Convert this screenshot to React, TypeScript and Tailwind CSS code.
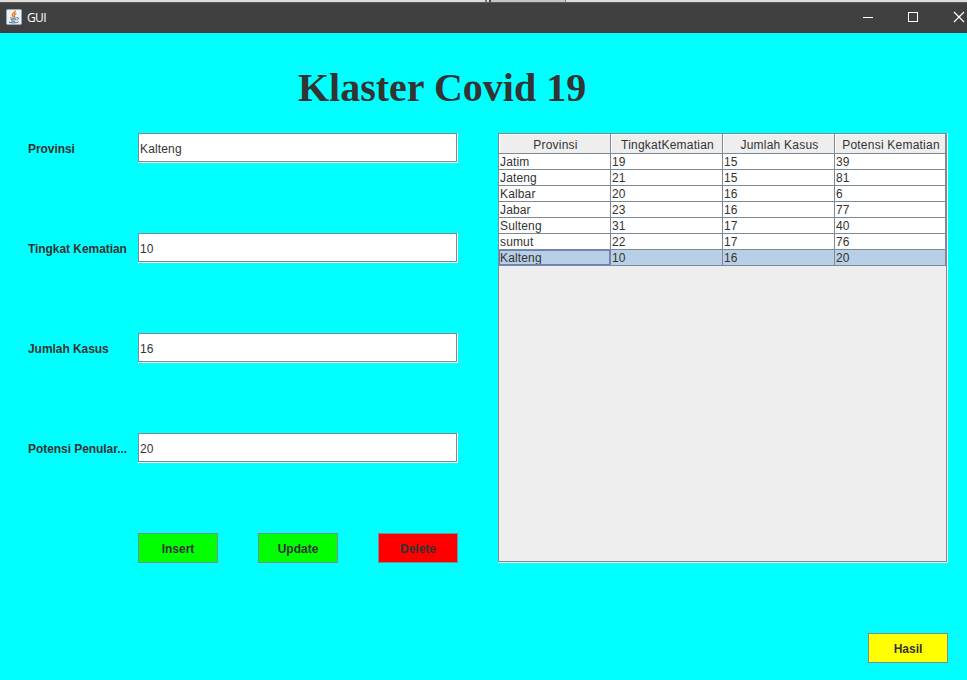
const fields = [
  { label: 'Provinsi', value: 'Kalteng' },
  { label: 'Tingkat Kematian', value: '10' },
  { label: 'Jumlah Kasus', value: '16' },
  { label: 'Potensi Penular...', value: '20' },
];

const columns = ['Provinsi', 'TingkatKematian', 'Jumlah Kasus', 'Potensi Kematian'];

const rows = [
  ['Jatim', '19', '15', '39'],
  ['Jateng', '21', '15', '81'],
  ['Kalbar', '20', '16', '6'],
  ['Jabar', '23', '16', '77'],
  ['Sulteng', '31', '17', '40'],
  ['sumut', '22', '17', '76'],
  ['Kalteng', '10', '16', '20'],
];

function JavaIcon() {
  return (
    <svg className="mt-[-2px] h-4 w-4 shrink-0" viewBox="0 0 16 16">
      <rect x="0.5" y="0.5" width="15" height="15" rx="1.2" fill="#eef2f5" stroke="#8fabc0" />
      <path d="M9.300 1.600c.7 1.800-3.300 2.700-3 4.400.1.800.9 1.200 1.200 2.100M10.300 4.400c-1.500.6-2.500 1.500-1.900 2.300.4.500.3.900-.1 1.400" fill="none" stroke="#ea7d1c" strokeWidth="1.4" />
      <path d="M4.200 8.800c1.500.7 4.600.6 6.300 0M4.800 10.500c1.500.6 3.700.6 5 0M5.300 12c1.200.5 2.900.5 3.900 0M10.700 8.800c2.600-.6 2.300 1.800-.2 2.400M3 13.200c2 1 7.500 1 9.700-.3" fill="none" stroke="#3d6c94" strokeWidth="1" />
    </svg>
  );
}

function TitleBar() {
  return (
    <header className="shrink-0">
      <div className="flex h-[2px] bg-[#dcdcdc]">
        <div className="w-[485px]" />
        <div className="w-[2px] bg-[#777777]" />
        <div className="w-[2px]" />
        <div className="w-[2px] bg-[#444444]" />
        <div className="w-[74px] bg-[#c6c6c6]" />
        <div className="w-px bg-[#888888]" />
      </div>
      <div className="flex h-[31px] items-center border-t border-[#5a5a5a] bg-[#404040] pl-1.5">
        <JavaIcon />
        <span className="ml-[5px] font-['Open_Sans','Noto_Sans',sans-serif] text-[12px] leading-4 tracking-[-0.6px] text-white">GUI</span>
        <svg className="ml-auto h-[30px] w-[104px]" viewBox="0 0 104 30" fill="none" stroke="#ffffff" shapeRendering="crispEdges">
          <path d="M0 14.500h10" />
          <rect x="45.500" y="9.500" width="9" height="9" />
          <path d="M91 9l10 10M101 9L91 19" shapeRendering="auto" strokeWidth="1.200" />
        </svg>
      </div>
    </header>
  );
}

function Field({ label, value }: { label: string; value: string }) {
  return (
    <label className="flex h-[30px] items-center">
      <span className="w-[110px] pt-[2px] text-[12px] font-bold tracking-[-0.06px] whitespace-nowrap">{label}</span>
      <span className="flex h-[30px] w-80 border-r border-b border-white">
        <span className="flex flex-1 items-center border border-[#7a8a99] bg-white pt-[2px] pl-px text-[12px] tracking-[0.15px]">{value}</span>
      </span>
    </label>
  );
}

function Button({ text, color }: { text: string; color: string }) {
  return (
    <button className={`h-[30px] w-20 border border-[#7a8a99] pt-[2px] text-[12px] font-bold ${color}`}>{text}</button>
  );
}

function DataTable() {
  return (
    <div className="h-[430px] w-[450px] border-r border-b border-white">
      <div className="h-full border border-[#7a8a99] bg-[#eeeeee]">
        <div className="grid h-5 grid-cols-[112px_112px_112px_111px]">
          {columns.map((c) => (
            <div key={c} className="border-r border-b border-[#7a8a99]">
              <div className="h-full border-t border-l border-white pt-[2px] pl-px text-center text-[12px] leading-4 tracking-[0.22px] whitespace-nowrap">{c}</div>
            </div>
          ))}
        </div>
        {rows.map((row, r) => (
          <div key={row[0]} className={`grid h-4 grid-cols-[112px_112px_112px_111px] grid-rows-[16px] ${r === 6 ? 'bg-[#b8cfe5]' : 'bg-white'}`}>
            {row.map((cell, i) => (
              <div key={i} className="h-4 border-r border-b border-[#7a8a99]">
                <div className={`h-[15px] pl-px text-[12px] leading-4 tracking-[0.15px] ${r === 6 && i === 0 ? 'outline-1 -outline-offset-1 outline-[#6382bf]' : ''}`}>{cell}</div>
              </div>
            ))}
          </div>
        ))}
      </div>
    </div>
  );
}

export default function App() {
  return (
    <div className="flex h-[680px] w-[967px] flex-col overflow-hidden bg-[#00ffff] font-['Liberation_Sans',Arial,sans-serif] text-[#333333]">
      <TitleBar />
      <main className="flex flex-1 flex-col">
        <h1 className="mt-8 h-[68px] pl-[298px] font-['Liberation_Serif',serif] text-[40px] leading-[46px] font-bold whitespace-nowrap">Klaster Covid 19</h1>
        <div className="flex pl-7">
          <div className="w-[470px]">
            <div className="flex flex-col gap-[70px]">
              {fields.map((f) => <Field key={f.label} label={f.label} value={f.value} />)}
            </div>
            <div className="mt-[70px] flex gap-10 pl-[110px]">
              <Button text="Insert" color="bg-[#00ff00]" />
              <Button text="Update" color="bg-[#00ff00]" />
              <Button text="Delete" color="bg-[#ff0000]" />
            </div>
          </div>
          <DataTable />
        </div>
        <div className="mt-[70px] flex justify-end pr-[19px]">
          <Button text="Hasil" color="bg-[#ffff00]" />
        </div>
      </main>
    </div>
  );
}
